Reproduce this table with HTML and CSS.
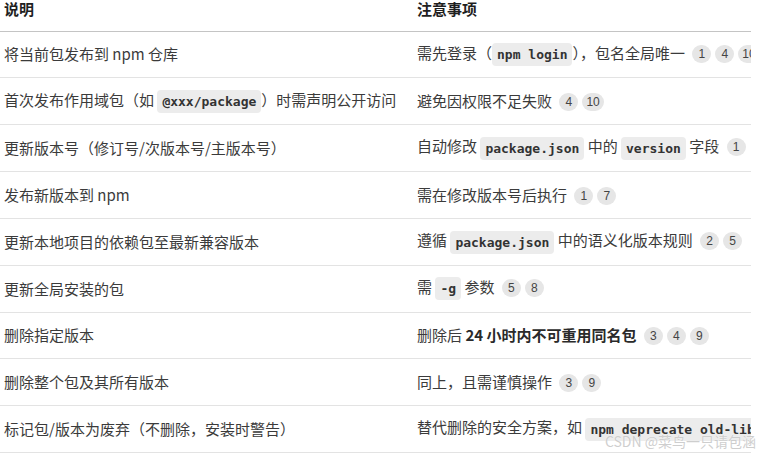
FILE: index.html
```html
<!doctype html>
<html lang="zh-CN">
  <head>
    <meta charset="UTF-8" />
    <meta name="viewport" content="width=device-width, initial-scale=1.0" />
    <title>npm 命令说明</title>
    <link rel="stylesheet" href="styles.css">
  </head>
  <body>
    <div class="wrap">
      <table class="cmd-table">
        <colgroup>
          <col class="col-desc" />
          <col class="col-note" />
        </colgroup>
        <thead>
          <tr>
            <th>说明</th>
            <th>注意事项</th>
          </tr>
        </thead>
        <tbody>
          <tr>
            <td>将当前包发布到 npm 仓库</td>
            <td>需先登录（<code>npm login</code>），包名全局唯一 <span class="ref">1</span><span class="ref">4</span><span class="ref">10</span></td>
          </tr>
          <tr>
            <td>首次发布作用域包（如 <code>@xxx/package</code>）时需声明公开访问</td>
            <td>避免因权限不足失败 <span class="ref">4</span><span class="ref">10</span></td>
          </tr>
          <tr>
            <td>更新版本号（修订号/次版本号/主版本号）</td>
            <td>自动修改 <code>package.json</code> 中的 <code>version</code> 字段 <span class="ref">1</span></td>
          </tr>
          <tr>
            <td>发布新版本到 npm</td>
            <td>需在修改版本号后执行 <span class="ref">1</span><span class="ref">7</span></td>
          </tr>
          <tr>
            <td>更新本地项目的依赖包至最新兼容版本</td>
            <td>遵循 <code>package.json</code> 中的语义化版本规则 <span class="ref">2</span><span class="ref">5</span></td>
          </tr>
          <tr>
            <td>更新全局安装的包</td>
            <td>需 <code>-g</code> 参数 <span class="ref">5</span><span class="ref">8</span></td>
          </tr>
          <tr>
            <td>删除指定版本</td>
            <td>删除后 <strong>24 小时内不可重用同名包</strong> <span class="ref">3</span><span class="ref">4</span><span class="ref">9</span></td>
          </tr>
          <tr>
            <td>删除整个包及其所有版本</td>
            <td>同上，且需谨慎操作 <span class="ref">3</span><span class="ref">9</span></td>
          </tr>
          <tr>
            <td>标记包/版本为废弃（不删除，安装时警告）</td>
            <td>替代删除的安全方案，如 <code>npm deprecate old-lib</code></td>
          </tr>
        </tbody>
      </table>
      <div class="watermark">CSDN @菜鸟一只请包涵</div>
    </div>
  </body>
</html>
```

FILE: styles.css
```css
:root {
  --text-color: #3b3b3b;
  --head-color: #1f1f1f;
  --line-color: #e3e3e3;
  --head-line: #c4c4c4;
  --code-bg: #ececec;
  --ref-bg: #e6e6e6;
}

* {
  margin: 0;
  padding: 0;
  box-sizing: border-box;
}

body {
  font-family: "Noto Sans CJK SC", "Liberation Sans", sans-serif;
  font-size: 15px;
  color: var(--text-color);
  background-color: white;
}

.wrap {
  position: relative;
  width: 764px;
  height: 455px;
  overflow: hidden;
}

.cmd-table {
  width: 751px;
  table-layout: fixed;
  border-collapse: collapse;
  white-space: nowrap;
}

.col-desc {
  width: 413px;
}

.cmd-table th {
  height: 31px;
  padding: 0 4px;
  text-align: left;
  vertical-align: top;
  line-height: 18px;
  font-weight: bold;
  color: var(--head-color);
  border-bottom: 1px solid var(--head-line);
}

.cmd-table td {
  height: 46.85px;
  padding: 0 4px;
  line-height: 20px;
  border-bottom: 1px solid var(--line-color);
  overflow: hidden;
}

.cmd-table strong {
  color: #2a2a2a;
}

code {
  display: inline-block;
  font-family: "DejaVu Sans Mono", monospace;
  font-size: 13px;
  font-weight: bold;
  line-height: 23px;
  padding: 0 5px;
  background-color: var(--code-bg);
  border-radius: 4px;
  color: #333;
  vertical-align: middle;
}

.ref {
  display: inline-block;
  min-width: 19px;
  height: 18px;
  line-height: 18px;
  padding: 0 4px;
  margin-left: 4px;
  border-radius: 9px;
  background-color: var(--ref-bg);
  font-family: "Liberation Sans", sans-serif;
  font-size: 12px;
  text-align: center;
  color: #444;
  vertical-align: 1px;
}

.watermark {
  position: absolute;
  right: 8px;
  bottom: 6px;
  font-size: 14px;
  line-height: 15px;
  color: rgba(190, 190, 190, 0.75);
  text-shadow: 0 0 1px white;
}
```
